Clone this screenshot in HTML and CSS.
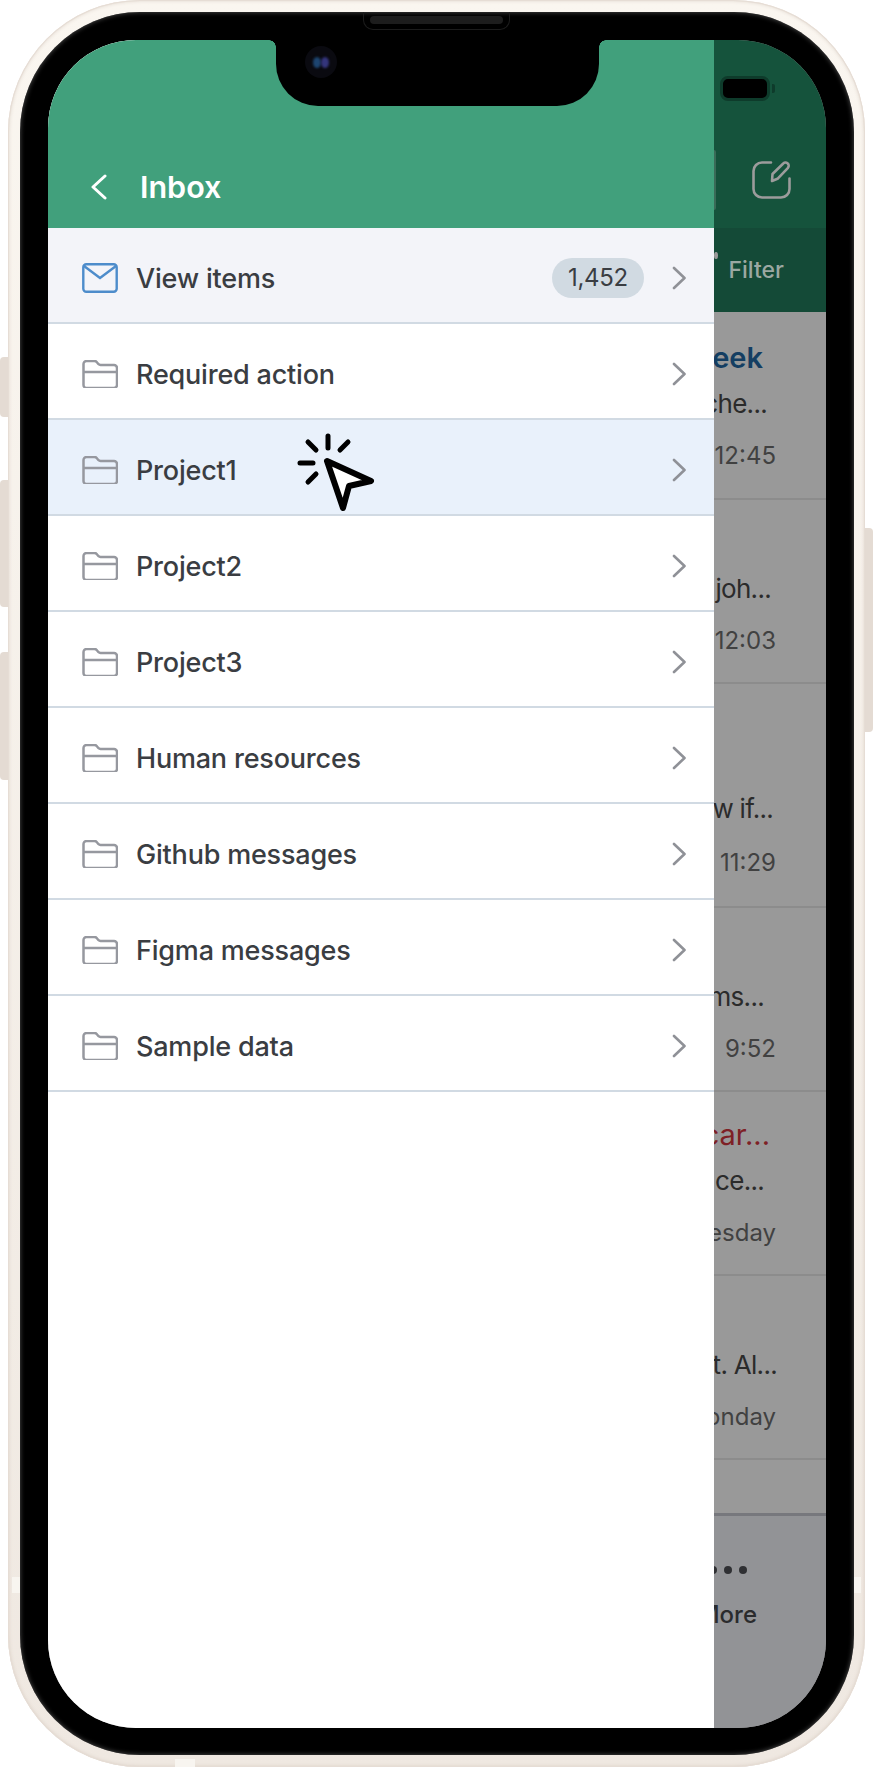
FILE: index.html
```html
<!DOCTYPE html>
<html lang="en">
<head>
    <meta charset="UTF-8">
    <meta name="viewport" content="width=device-width, initial-scale=1.0">
    <title>Inbox</title>
    <link rel="stylesheet" href="styles.css">
</head>

<body>

    <div class="phone">
        <!-- Hardware buttons -->
        <span class="side-btn mute"></span>
        <span class="side-btn vol-up"></span>
        <span class="side-btn vol-down"></span>
        <span class="side-btn power"></span>
        <span class="band band-left"></span>
        <span class="band band-right"></span>
        <span class="band band-bottom"></span>

        <div class="bezel">
            <div class="speaker"></div>

            <div class="screen">

                <!-- Dimmed mail app behind the drawer -->
                <div class="app">
                    <div class="app-header">
                        <div class="battery"></div>
                        <div class="app-bar">
                            <div class="search"></div>
                            <svg class="edit-icon" width="40" height="40" viewBox="0 0 40 40">
                                <path d="M19 2.500H10a8.500 8.500 0 0 0-8.500 8.500v18a8.500 8.500 0 0 0 8.500 8.500h19a8.500 8.500 0 0 0 8.500-8.500V18.500" fill="none" stroke="#9c9c9c" stroke-width="2.600" stroke-linecap="round"/>
                                <path d="M20.500 14L31 3.800a3.200 3.200 0 0 1 5 4L25.500 18.800l-5.500 2.200z" fill="none" stroke="#9c9c9c" stroke-width="2.600" stroke-linejoin="round"/>
                            </svg>
                        </div>
                    </div>
                    <div class="filter-bar">
                        <span class="filter-dot"></span>
                        <span>Filter</span>
                    </div>
                    <div class="mail-list">
                        <div class="mail mail-first">
                            <p class="subject unread">eek</p>
                            <p class="preview end-9">che...</p>
                            <p class="time">12:45</p>
                        </div>
                        <div class="mail">
                            <p class="subject"></p>
                            <p class="preview end-5">joh...</p>
                            <p class="time">12:03</p>
                        </div>
                        <div class="mail mail-tall">
                            <p class="subject"></p>
                            <p class="preview end-3">w if...</p>
                            <p class="time">11:29</p>
                        </div>
                        <div class="mail">
                            <p class="subject"></p>
                            <p class="preview end-12">ms...</p>
                            <p class="time">9:52</p>
                        </div>
                        <div class="mail">
                            <p class="subject urgent">car...</p>
                            <p class="preview end-12">ce...</p>
                            <p class="time">esday</p>
                        </div>
                        <div class="mail">
                            <p class="subject"></p>
                            <p class="preview end-out">t. Al...</p>
                            <p class="time">onday</p>
                        </div>
                    </div>
                    <div class="tab-bar">
                        <div class="dots"><i></i><i></i><i></i></div>
                        <span class="tab-label">More</span>
                    </div>
                </div>

                <!-- Drawer -->
                <div class="drawer">
                    <header class="drawer-header">
                        <svg class="back" width="16" height="26" viewBox="0 0 16 26">
                            <path d="M14 2L2 13l12 11" fill="none" stroke="#fff" stroke-width="3" stroke-linecap="round" stroke-linejoin="round"/>
                        </svg>
                        <h1>Inbox</h1>
                    </header>

                    <ul class="folders">
                        <li class="row row-all">
                            <svg class="row-icon" width="36" height="30" viewBox="0 0 36 30">
                                <rect x="1.300" y="1.300" width="33.400" height="27.400" rx="3" fill="none" stroke="#4d8ccb" stroke-width="2.400"/>
                                <path d="M2 3l16 12L34 3" fill="none" stroke="#4d8ccb" stroke-width="2.400"/>
                            </svg>
                            <span class="row-label">View items</span>
                            <span class="badge">1,452</span>
                            <svg class="chevron" width="14" height="24" viewBox="0 0 14 24"><path d="M2 2l10.500 10L2 22"/></svg>
                        </li>
                        <li class="row">
                            <svg class="row-icon" width="36" height="28" viewBox="0 0 36 28"><use href="#folder"/></svg>
                            <span class="row-label">Required action</span>
                            <svg class="chevron" width="14" height="24" viewBox="0 0 14 24"><path d="M2 2l10.500 10L2 22"/></svg>
                        </li>
                        <li class="row row-hover">
                            <svg class="row-icon" width="36" height="28" viewBox="0 0 36 28"><use href="#folder"/></svg>
                            <span class="row-label">Project1</span>
                            <svg class="chevron" width="14" height="24" viewBox="0 0 14 24"><path d="M2 2l10.500 10L2 22"/></svg>
                            <svg class="cursor" width="80" height="80" viewBox="0 0 80 80">
                                <g fill="none" stroke="#000" stroke-width="5" stroke-linecap="round">
                                    <path d="M33 4v12M53 10l-8 8M13 10l8 8M5 31h13M13 50l8-8"/>
                                </g>
                                <path d="M32 29l44 20-22 5-6 22z" fill="#fff" stroke="#000" stroke-width="6" stroke-linejoin="round"/>
                            </svg>
                        </li>
                        <li class="row">
                            <svg class="row-icon" width="36" height="28" viewBox="0 0 36 28"><use href="#folder"/></svg>
                            <span class="row-label">Project2</span>
                            <svg class="chevron" width="14" height="24" viewBox="0 0 14 24"><path d="M2 2l10.500 10L2 22"/></svg>
                        </li>
                        <li class="row">
                            <svg class="row-icon" width="36" height="28" viewBox="0 0 36 28"><use href="#folder"/></svg>
                            <span class="row-label">Project3</span>
                            <svg class="chevron" width="14" height="24" viewBox="0 0 14 24"><path d="M2 2l10.500 10L2 22"/></svg>
                        </li>
                        <li class="row">
                            <svg class="row-icon" width="36" height="28" viewBox="0 0 36 28"><use href="#folder"/></svg>
                            <span class="row-label">Human resources</span>
                            <svg class="chevron" width="14" height="24" viewBox="0 0 14 24"><path d="M2 2l10.500 10L2 22"/></svg>
                        </li>
                        <li class="row">
                            <svg class="row-icon" width="36" height="28" viewBox="0 0 36 28"><use href="#folder"/></svg>
                            <span class="row-label">Github messages</span>
                            <svg class="chevron" width="14" height="24" viewBox="0 0 14 24"><path d="M2 2l10.500 10L2 22"/></svg>
                        </li>
                        <li class="row">
                            <svg class="row-icon" width="36" height="28" viewBox="0 0 36 28"><use href="#folder"/></svg>
                            <span class="row-label">Figma messages</span>
                            <svg class="chevron" width="14" height="24" viewBox="0 0 14 24"><path d="M2 2l10.500 10L2 22"/></svg>
                        </li>
                        <li class="row">
                            <svg class="row-icon" width="36" height="28" viewBox="0 0 36 28"><use href="#folder"/></svg>
                            <span class="row-label">Sample data</span>
                            <svg class="chevron" width="14" height="24" viewBox="0 0 14 24"><path d="M2 2l10.500 10L2 22"/></svg>
                        </li>
                    </ul>
                </div>

                <!-- Notch sits on top of everything -->
                <div class="notch">
                    <div class="camera"><i></i><i></i></div>
                </div>
            </div>
        </div>
    </div>

    <!-- Shared folder icon -->
    <svg class="defs" width="0" height="0">
        <symbol id="folder" viewBox="0 0 36 28">
            <path d="M1.500 4a3 3 0 0 1 3-3h8a3 3 0 0 1 2 .8l2 2.400a3 3 0 0 0 2 .8H32a3 3 0 0 1 3 3v17a3 3 0 0 1-3 3H4.500a3 3 0 0 1-3-3zM1.500 12H35" fill="none" stroke="#96989f" stroke-width="2.500"/>
        </symbol>
    </svg>

</body>
</html>
```

FILE: styles.css
```css
/* Reset */
* { margin: 0; padding: 0; box-sizing: border-box; }

body {
    width: 874px;
    height: 1768px;
    background: #fff;
    font-family: Inter, "Liberation Sans", sans-serif;
    overflow: hidden;
}

.defs { position: absolute; }

/* Phone frame */
.phone {
    position: relative;
    width: 857px;
    height: 1767px;
    margin-left: 8px;
    padding: 12px 11px 12px 12px;
    background: linear-gradient(180deg, #faf6f0, #efe8e1);
    border-radius: 132px;
    box-shadow: inset 0 0 0 1px #e6ddd5, inset 0 0 4px #d3c7bc;
}

.side-btn {
    position: absolute;
    width: 8px;
    background: #e4dbd3;
}

.mute { left: -8px; top: 357px; height: 60px; border-radius: 4px 0 0 4px; }
.vol-up { left: -8px; top: 480px; height: 127px; border-radius: 4px 0 0 4px; }
.vol-down { left: -8px; top: 652px; height: 128px; border-radius: 4px 0 0 4px; }
.power { right: -8px; top: 528px; height: 204px; border-radius: 0 4px 4px 0; }

.band { position: absolute; background: #f8f5f0; }
.band-left { left: 4px; top: 1577px; width: 8px; height: 16px; }
.band-right { right: 4px; top: 1577px; width: 8px; height: 16px; }
.band-bottom { left: 167px; bottom: 0; width: 20px; height: 8px; }

.bezel {
    position: relative;
    height: 100%;
    padding: 28px 28px 27px 28px;
    background: #000;
    border-radius: 120px;
    box-shadow: inset 0 0 5px #555;
}

.speaker {
    position: absolute;
    left: 343px;
    top: 0;
    width: 147px;
    height: 18px;
    padding: 4px 6px;
    border: 1px solid #1c1c1c;
    border-top: none;
    border-radius: 0 0 10px 10px;
}

.speaker::before {
    content: "";
    display: block;
    height: 8px;
    background: #1d1d1d;
    border-radius: 4px;
}

.screen {
    position: relative;
    height: 100%;
    background: #999;
    border-radius: 88px;
    overflow: hidden;
}

/* Notch */
.notch {
    position: absolute;
    left: 228px;
    top: 0;
    width: 323px;
    height: 66px;
    background: #000;
    border-radius: 0 0 42px 42px;
}

.notch::before,
.notch::after {
    content: "";
    position: absolute;
    top: 0;
    width: 7px;
    height: 7px;
}

.notch::before {
    left: -7px;
    background: radial-gradient(circle at 0 100%, transparent 6.500px, #000 7px);
}

.notch::after {
    right: -7px;
    background: radial-gradient(circle at 100% 100%, transparent 6.500px, #000 7px);
}

.camera {
    position: absolute;
    left: 29px;
    top: 6px;
    width: 32px;
    height: 32px;
    display: flex;
    align-items: center;
    justify-content: center;
    background: #0a0a10;
    border-radius: 50%;
}

.camera i {
    width: 8px;
    height: 11px;
    border-radius: 50%;
    background: #1d4570;
    filter: blur(1px);
}

.camera i + i { background: #34357c; }

/* App behind the drawer */
.app {
    display: flex;
    flex-direction: column;
    height: 100%;
    padding-left: 666px;
    white-space: nowrap;
}

.app-header {
    height: 188px;
    flex: none;
    padding-top: 36px;
    background: #15533c;
}

.battery {
    position: relative;
    width: 50px;
    height: 25px;
    margin-left: 6px;
    background: #000;
    border: 3px solid #0e3b2b;
    border-radius: 8px;
}

.battery::after {
    content: "";
    position: absolute;
    right: -8px;
    top: 5px;
    width: 3px;
    height: 9px;
    background: #0e3b2b;
    border-radius: 0 2px 2px 0;
}

.app-bar {
    display: flex;
    align-items: center;
    height: 60px;
    margin-top: 49px;
}

.search {
    width: 2px;
    height: 60px;
    margin-right: 36px;
    border-right: 2px solid #3a6b58;
    border-radius: 0 6px 6px 0;
}

.filter-bar {
    height: 84px;
    flex: none;
    display: flex;
    align-items: center;
    justify-content: flex-end;
    gap: 11px;
    padding-right: 42px;
    background: #144a37;
    color: #9ba8a2;
    font-size: 23px;
    font-weight: 500;
}

.filter-dot {
    width: 7px;
    height: 7px;
    margin-bottom: 30px;
    background: #9a9a9a;
    border-radius: 50%;
}

.mail-list {
    flex: 1;
}

.mail {
    height: 184px;
    padding: 28px 50px 0 0;
    display: flex;
    flex-direction: column;
    align-items: flex-end;
    overflow: hidden;
    border-bottom: 2px solid #8c8c8c;
}

.mail-first { height: 188px; padding-top: 31px; }
.mail-tall { height: 224px; padding-top: 64px; }

.subject {
    height: 30px;
    line-height: 30px;
    margin-right: 6px;
    font-size: 29px;
    color: #7e2025;
}

.unread { margin-right: 13px; font-weight: 600; color: #143e62; }

.preview {
    margin-top: 15px;
    line-height: 32px;
    font-size: 26px;
    letter-spacing: -0.7px;
    color: #2b2b2b;
}

.end-3 { margin-right: 3px; }
.end-5 { margin-right: 5px; }
.end-9 { margin-right: 9px; }
.end-12 { margin-right: 12px; }
.end-out { margin-right: -1px; }

.time {
    margin-top: 21px;
    line-height: 30px;
    font-size: 24px;
    color: #414141;
}

.mail-tall .time { margin-top: 23px; }

.tab-bar {
    height: 215px;
    flex: none;
    padding: 50px 69px 0 0;
    display: flex;
    flex-direction: column;
    align-items: flex-end;
    background: #929396;
    border-top: 3px solid #77787d;
    color: #2a2b2d;
}

.dots {
    display: flex;
    gap: 7px;
    margin-right: 10px;
}

.dots i {
    width: 8px;
    height: 8px;
    background: #2f3033;
    border-radius: 50%;
}

.tab-label {
    margin-top: 26px;
    font-size: 24px;
    font-weight: 500;
}

/* Drawer */
.drawer {
    position: absolute;
    left: 0;
    top: 0;
    bottom: 0;
    width: 666px;
    background: #fff;
}

.drawer-header {
    height: 188px;
    display: flex;
    align-items: flex-end;
    gap: 33px;
    padding: 0 0 22px 43px;
    background: #41a07c;
    color: #fff;
}

.drawer-header h1 {
    font-size: 30.500px;
    line-height: 38px;
    font-weight: 600;
}

.back { margin-bottom: 6px; }

.folders { list-style: none; }

.row {
    position: relative;
    height: 96px;
    display: flex;
    align-items: center;
    padding: 6px 29px 0 34px;
    border-bottom: 2px solid #d1dae3;
    color: #3a3d42;
}

.row-all { background: #f3f4f9; }
.row-hover { background: #e9f1fb; }

.row-icon { flex: none; }

.row-label {
    flex: 1;
    margin-left: 18px;
    font-size: 27px;
    font-weight: 450;
    letter-spacing: -0.2px;
}

.badge {
    width: 92px;
    height: 40px;
    margin-right: 28px;
    background: #d1dae2;
    border-radius: 20px;
    font-size: 24px;
    letter-spacing: -0.3px;
    line-height: 40px;
    text-align: center;
}

.chevron { flex: none; margin-right: -1px; }

.chevron path {
    fill: none;
    stroke: #8f9197;
    stroke-width: 2.600;
    stroke-linecap: round;
    stroke-linejoin: round;
}

.cursor {
    position: absolute;
    left: 247px;
    top: 12px;
}
```
